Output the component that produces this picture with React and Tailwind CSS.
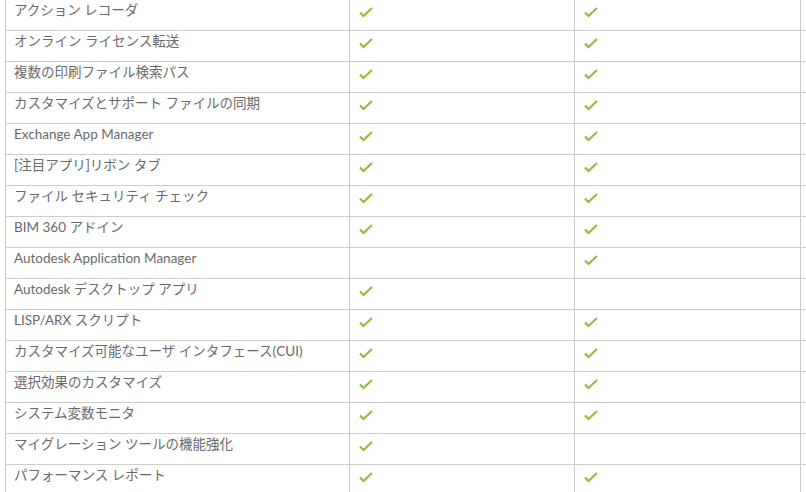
const rows = [
  ['アクション レコーダ', true, true],
  ['オンライン ライセンス転送', true, true],
  ['複数の印刷ファイル検索パス', true, true],
  ['カスタマイズとサポート ファイルの同期', true, true],
  ['Exchange App Manager', true, true],
  ['[注目アプリ]リボン タブ', true, true],
  ['ファイル セキュリティ チェック', true, true],
  ['BIM 360 アドイン', true, true],
  ['Autodesk Application Manager', false, true],
  ['Autodesk デスクトップ アプリ', true, false],
  ['LISP/ARX スクリプト', true, true],
  ['カスタマイズ可能なユーザ インタフェース(CUI)', true, true],
  ['選択効果のカスタマイズ', true, true],
  ['システム変数モニタ', true, true],
  ['マイグレーション ツールの機能強化', true, false],
  ['パフォーマンス レポート', true, true],
];

function Check() {
  return (
    <svg width="14" height="11" viewBox="0 0 14 11" className="block">
      <polyline
        points="1,5.5 4.5,9 13,1"
        fill="none"
        stroke="#8bbf3f"
        strokeWidth="2.2"
      />
    </svg>
  );
}

export default function App() {
  return (
    <div className="w-[806px] h-[492px] overflow-hidden bg-white">
      <div className="ml-[5px] w-[900px] font-['Lato','Noto_Sans_CJK_JP',sans-serif] text-[13.5px] leading-[18px] text-[#6a6a6a]">
        {rows.map(([label, a, b]) => (
          <div key={label} className="flex h-[31px] border-b border-[#cccccc]">
            <div className="w-[344px] border-l border-[#cccccc] pl-[8px] pt-[1px] whitespace-nowrap">
              {label}
            </div>
            <div className="w-[225px] border-l border-[#cccccc] pl-[9px] pt-[7px]">
              {a && <Check />}
            </div>
            <div className="w-[226px] border-l border-[#cccccc] pl-[9px] pt-[7px]">
              {b && <Check />}
            </div>
            <div className="flex-1 border-l border-[#cccccc]" />
          </div>
        ))}
      </div>
    </div>
  );
}
